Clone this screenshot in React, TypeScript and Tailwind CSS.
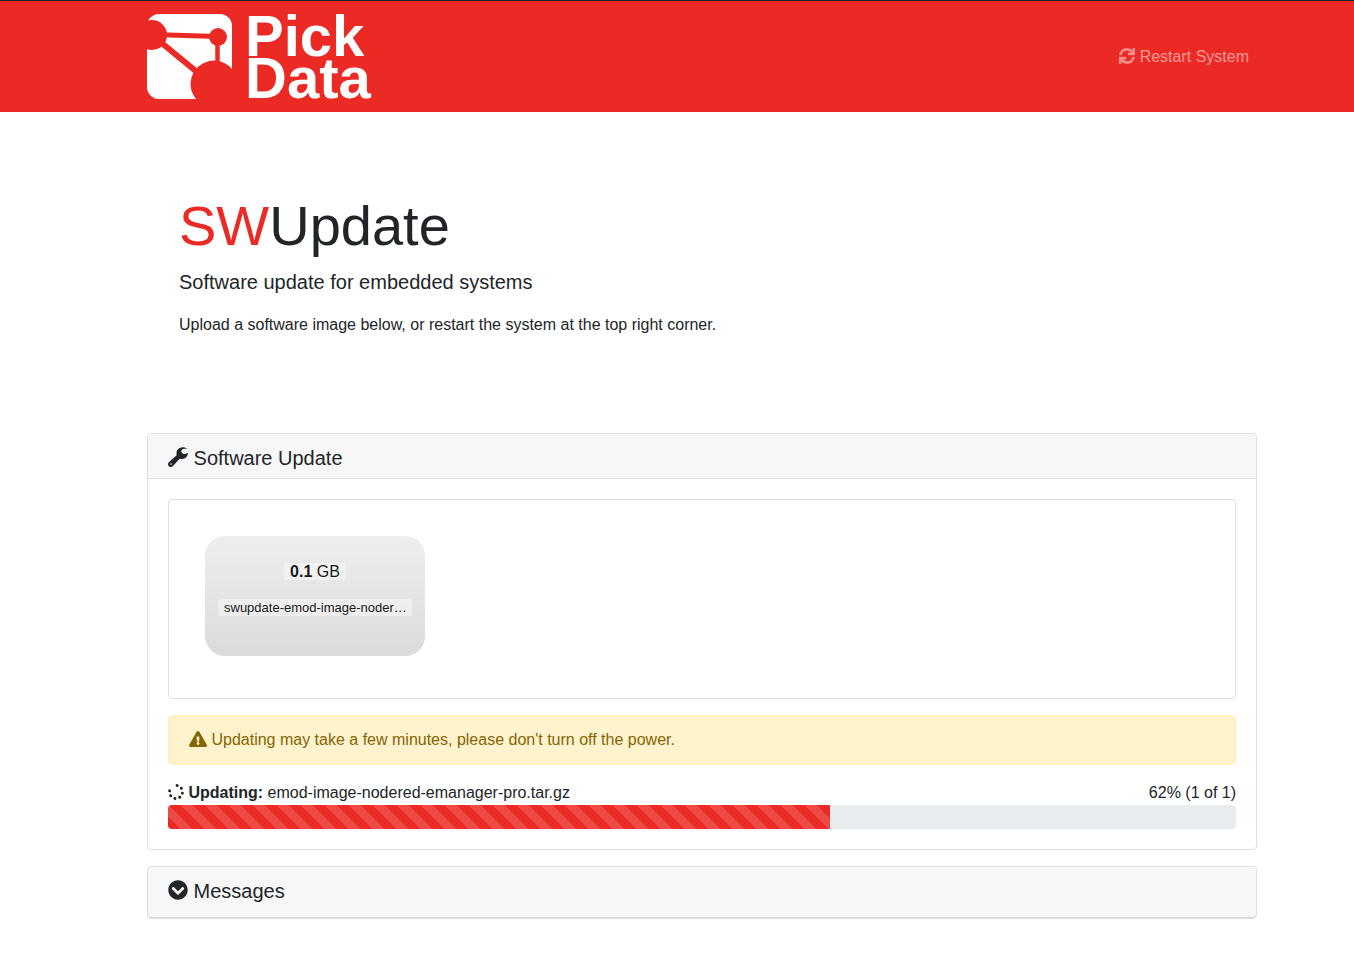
import {
  FaChevronCircleDown,
  FaExclamationTriangle,
  FaSpinner,
  FaSync,
} from "react-icons/fa";

const update = {
  file: "emod-image-nodered-emanager-pro.tar.gz",
  percent: 62,
  step: 1,
  steps: 1,
};

function Logo() {
  return (
    <a href="#" className="flex items-center gap-[13px] text-white">
      <svg viewBox="0 0 85 85" className="size-[85px]" aria-hidden="true">
        <path
          fill="#fff"
          d="M12 0H73A12 12 0 0 1 85 12V55A22.500 22.500 0 0 0 49 85H12A12 12 0 0 1 0 73V12A12 12 0 0 1 12 0Z"
        />
        <g fill="#eb2a25" stroke="#eb2a25">
          <circle cx="5" cy="21" r="15" strokeWidth="0" />
          <circle cx="71" cy="23" r="9" strokeWidth="0" />
          <path d="M5 20.500 L71 22.500" strokeWidth="5" />
          <path d="M70.500 23V56" strokeWidth="4.500" />
          <path d="M5 21L56 63" strokeWidth="6" />
        </g>
      </svg>
      <span className="text-[58px] leading-[42px] font-bold">
        Pick
        <br />
        Data
      </span>
    </a>
  );
}

function WrenchIcon() {
  return (
    <svg
      viewBox="0 0 60 60"
      className="inline size-5 align-[-2px]"
      aria-hidden="true"
    >
      <path
        fill="currentColor"
        d="M57 5C52 0 42 -1 35 3C27 7 24 16 26 25L3 45C-1 49 -1 55 3 58C6 61 11 61 15 57L35 35C43 37 51 35 56 29C58 26 60 22 60 18L51 21C45 22 40 18 40 13C40 8 44 5 49 5Z"
      />
      <circle cx="9" cy="51" r="2.500" fill="#f7f7f7" />
    </svg>
  );
}

function FilePreview() {
  return (
    <div className="w-[220px] h-[120px] rounded-[20px] bg-linear-to-b from-[#eee] to-[#dbdbdb] px-[13px] pt-[27px] text-center text-[#1a1a1a]">
      <div className="mb-[19px] flex justify-center leading-[17px]">
        <span className="rounded-[3px] bg-white/40 px-1.5">
          <strong>0.1</strong> GB
        </span>
      </div>
      <div className="whitespace-nowrap rounded-[3px] bg-white/40 pl-1.5 pr-1 text-left text-[13px] leading-[17px]">
        swupdate-emod-image-noder…
      </div>
    </div>
  );
}

function Progress() {
  return (
    <div>
      <div className="flex justify-between leading-6">
        <div>
          <FaSpinner className="inline -rotate-80 align-[-2px]" />{" "}
          <strong>Updating:</strong> {update.file}
        </div>
        <span>
          {update.percent}% ({update.step} of {update.steps})
        </span>
      </div>
      <div
        role="progressbar"
        aria-label="Update progress"
        aria-valuenow={update.percent}
        aria-valuemin={0}
        aria-valuemax={100}
        className="h-6 overflow-hidden rounded bg-[#e9ecef]"
      >
        <div
          className="h-full bg-[#eb2a25] bg-[linear-gradient(45deg,rgba(255,255,255,.15)_25%,transparent_25%,transparent_50%,rgba(255,255,255,.15)_50%,rgba(255,255,255,.15)_75%,transparent_75%,transparent)] bg-size-[24px_24px] bg-position-[13px_0]"
          style={{ width: `${update.percent}%` }}
        />
      </div>
    </div>
  );
}

export default function App() {
  return (
    <div className="min-h-screen bg-white font-['Liberation_Sans',Arial,sans-serif] text-base text-[#212529]">
      {/* NAVBAR */}
      <header className="border-t border-[#222] bg-[#eb2a25] pl-[147px] pr-[97px]">
        <nav className="flex h-[111px] items-center justify-between">
          <Logo />
          <a href="#" className="px-2 text-white opacity-50">
            <FaSync className="inline stroke-current stroke-[10px] align-[-2px]" />{" "}
            Restart System
          </a>
        </nav>
      </header>

      <main className="pl-[147px] pr-[97px] pb-12">
        {/* INTRO */}
        <section className="px-8 pt-20 pb-24">
          <h1 className="mb-2 text-[56px] leading-[67px]">
            <span className="text-[#eb2a25]">SW</span>Update
          </h1>
          <p className="mb-4 text-xl leading-[30px]">
            Software update for embedded systems
          </p>
          <p>
            Upload a software image below, or restart the system at the top
            right corner.
          </p>
        </section>

        {/* SOFTWARE UPDATE */}
        <section className="mb-4 rounded border border-[#dfdfdf]">
          <div className="rounded-t border-b border-[#dfdfdf] bg-[#f7f7f7] px-5 pt-3 pb-2">
            <h5 className="text-xl leading-6">
              <WrenchIcon /> Software Update
            </h5>
          </div>
          <div className="p-5">
            <div className="mb-4 h-[200px] rounded border border-[#dfdfdf] p-9">
              <FilePreview />
            </div>
            <div
              role="alert"
              className="mb-4 rounded border border-[#ffeeba] bg-[#fff3cd] px-5 py-3 leading-6 text-[#856404]"
            >
              <FaExclamationTriangle className="inline h-4 w-[18px] align-[-2px]" />{" "}
              Updating may take a few minutes, please don't turn off the power.
            </div>
            <Progress />
          </div>
        </section>

        {/* MESSAGES */}
        <section className="rounded border border-[#dfdfdf]">
          <button
            type="button"
            className="w-full rounded border-b border-[#d4d4d4] bg-[#f7f7f7] px-5 pt-3 pb-3.5 text-left text-xl leading-6"
          >
            <FaChevronCircleDown className="inline align-[-2px]" /> Messages
          </button>
        </section>
      </main>
    </div>
  );
}
